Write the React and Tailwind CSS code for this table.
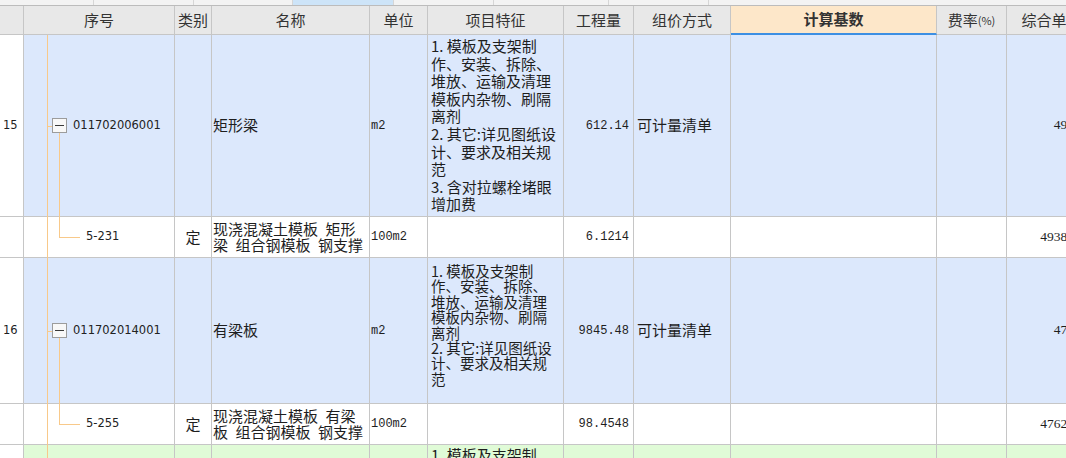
import React from 'react';

// column widths (border-right included)
const W = {
  no: 'w-[24px]',
  code: 'w-[151px]',
  type: 'w-[37px]',
  name: 'w-[158px]',
  unit: 'w-[58px]',
  feat: 'w-[136px]',
  qty: 'w-[70px]',
  mode: 'w-[97px]',
  base: 'w-[206px]',
  rate: 'w-[70px]',
  price: 'w-[90px]',
};

const grid = 'border-[#c6c6c6]';
const cjk = "font-['Noto_Sans_CJK_SC',sans-serif]";
const sans = "font-['DejaVu_Sans',sans-serif]";
const mono = "font-['Liberation_Mono',monospace]";
const serif = "font-['Liberation_Serif',serif]";
const tree = 'bg-[#f8c98a]';

const feat15 = [
  '1. 模板及支架制',
  '作、安装、拆除、',
  '堆放、运输及清理',
  '模板内杂物、刷隔',
  '离剂',
  '2. 其它:详见图纸设',
  '计、要求及相关规',
  '范',
  '3. 含对拉螺栓堵眼',
  '增加费',
];

const feat16 = feat15.slice(0, 8);

const rows = [
  { kind: 'bill', no: '15', code: '011702006001', name: '矩形梁', unit: 'm2', feat: feat15, featCls: 'text-[15px] leading-[17.6px] pt-[2px]', qty: '612.14', mode: '可计量清单', price: '49.38', h: 'h-[182px]' },
  { kind: 'item', code: '5-231', type: '定', name: ['现浇混凝土模板\u2002矩形', '梁\u2002组合钢模板\u2002钢支撑'], unit: '100m2', qty: '6.1214', price: '4938.47', h: 'h-[41px]' },
  { kind: 'bill', no: '16', code: '011702014001', name: '有梁板', unit: 'm2', feat: feat16, featCls: 'text-[14.5px] leading-[15.4px] pt-[5px]', qty: '9845.48', mode: '可计量清单', price: '47.62', h: 'h-[146px]' },
  { kind: 'item', code: '5-255', type: '定', name: ['现浇混凝土模板\u2002有梁', '板\u2002组合钢模板\u2002钢支撑'], unit: '100m2', qty: '98.4548', price: '4762.31', h: 'h-[41px]' },
  { kind: 'green', feat: feat15.slice(0, 2), featCls: 'text-[15px] leading-[17.6px] pt-[1px]', h: 'h-[60px]' },
];

function Head({ w, children, className = '' }) {
  return (
    <div className={`${w} shrink-0 h-full border-r border-b ${grid} bg-[#e8e8e8] flex items-center justify-center text-[15px] text-[#333] whitespace-nowrap overflow-hidden ${className}`}>
      {children}
    </div>
  );
}

function CodeCell({ r }) {
  if (r.kind === 'bill') {
    return (
      <div className={`${W.code} shrink-0 relative border-r ${grid} flex items-center`}>
        <div className={`absolute left-[23px] top-0 bottom-[-1px] w-px ${tree}`} />
        <div className={`absolute left-[23px] top-1/2 w-[5px] h-px ${tree}`} />
        <div className={`absolute left-[35px] top-1/2 bottom-[-1px] w-px ${tree}`} />
        <div className="relative z-10 ml-[28px] w-[15px] h-[15px] border border-[#9c9c9c] bg-[#f8f8f8] flex items-center justify-center">
          <div className="w-[9px] h-[1.5px] bg-[#3a3a3a]" />
        </div>
        <span className={`ml-[6px] text-[11.5px] text-[#222] ${sans}`}>{r.code}</span>
      </div>
    );
  }
  if (r.kind === 'item') {
    return (
      <div className={`${W.code} shrink-0 relative border-r ${grid} flex items-center`}>
        <div className={`absolute left-[23px] top-0 bottom-[-1px] w-px ${tree}`} />
        <div className={`absolute left-[35px] top-[-1px] h-[calc(50%+1px)] w-px ${tree}`} />
        <div className={`absolute left-[35px] top-1/2 w-[21px] h-px ${tree}`} />
        <span className={`ml-[62px] text-[11.5px] text-[#222] ${sans}`}>{r.code}</span>
      </div>
    );
  }
  return (
    <div className={`${W.code} shrink-0 relative border-r ${grid}`}>
      <div className={`absolute left-[23px] top-0 bottom-0 w-px ${tree}`} />
    </div>
  );
}

function Row({ r }) {
  const bg = r.kind === 'bill' ? 'bg-[#dce8fc]' : r.kind === 'green' ? 'bg-[#e0fbd7]' : 'bg-white';
  const cell = `shrink-0 h-full border-r ${grid}`;
  return (
    <div className={`flex ${r.h} border-b ${grid} ${bg} ${cjk} text-[#1e1e1e]`}>
      <div className={`${W.no} ${cell} bg-white flex items-center pl-[3px] text-[11.5px] ${sans}`}>{r.no}</div>
      <CodeCell r={r} />
      <div className={`${W.type} ${cell} flex items-center justify-center text-[15px]`}>{r.type}</div>
      <div className={`${W.name} ${cell} flex items-center pl-[1px] text-[15px] overflow-hidden`}>
        {Array.isArray(r.name) ? (
          <div className="leading-[16px] whitespace-nowrap">
            {r.name.map((l) => (
              <div key={l}>{l}</div>
            ))}
          </div>
        ) : (
          r.name
        )}
      </div>
      <div className={`${W.unit} ${cell} flex items-center pl-[1px] text-[12px] ${mono}`}>{r.unit}</div>
      <div className={`${W.feat} ${cell} pl-[3px] whitespace-nowrap overflow-hidden ${r.featCls || ''}`}>
        {(r.feat || []).map((l, i) => (
          <div key={i}>{l}</div>
        ))}
      </div>
      <div className={`${W.qty} ${cell} flex items-center justify-end pr-[4px] text-[12px] ${mono}`}>{r.qty}</div>
      <div className={`${W.mode} ${cell} flex items-center pl-[3px] text-[15px]`}>{r.mode}</div>
      <div className={`${W.base} ${cell}`} />
      <div className={`${W.rate} ${cell}`} />
      <div className={`${W.price} ${cell} flex items-center justify-end pr-[12px] text-[13.5px] ${serif}`}>{r.price}</div>
    </div>
  );
}

export default function App() {
  return (
    <div className="w-[1066px] h-[458px] overflow-hidden bg-white">
      <div className="w-[1200px]">
        {/* thin strip above the header */}
        <div className="flex h-[6px] border-b border-[#bcbcbc] bg-[#f3f3f3]">
          <div className="w-[94px] border-r border-[#d6d6d6]" />
          <div className="w-[100px] border-r border-[#d6d6d6]" />
          <div className="w-[99px] border-r border-[#d6d6d6]" />
          <div className="w-[101px] border-r border-[#d6d6d6] bg-[#cde4f8]" />
          <div className="w-[100px] border-r border-[#d6d6d6]" />
          <div className="w-[115px] border-r border-[#d6d6d6]" />
          <div className="w-[100px] border-r border-[#d6d6d6]" />
          <div className="flex-1" />
        </div>

        {/* header */}
        <div className={`flex h-[29px] ${cjk}`}>
          <Head w={W.no} />
          <Head w={W.code}>序号</Head>
          <Head w={W.type}>类别</Head>
          <Head w={W.name}>名称</Head>
          <Head w={W.unit}>单位</Head>
          <Head w={W.feat}>项目特征</Head>
          <Head w={W.qty}>工程量</Head>
          <Head w={W.mode}>组价方式</Head>
          <Head w={W.base} className="!bg-[#fde7c9] !border-b-2 !border-b-[#3d8fe3] font-bold">计算基数</Head>
          <Head w={W.rate}>
            费率<span className="text-[11px]">(%)</span>
          </Head>
          <Head w={W.price}>综合单价</Head>
        </div>

        {rows.map((r, i) => (
          <Row key={i} r={r} />
        ))}
      </div>
    </div>
  );
}
